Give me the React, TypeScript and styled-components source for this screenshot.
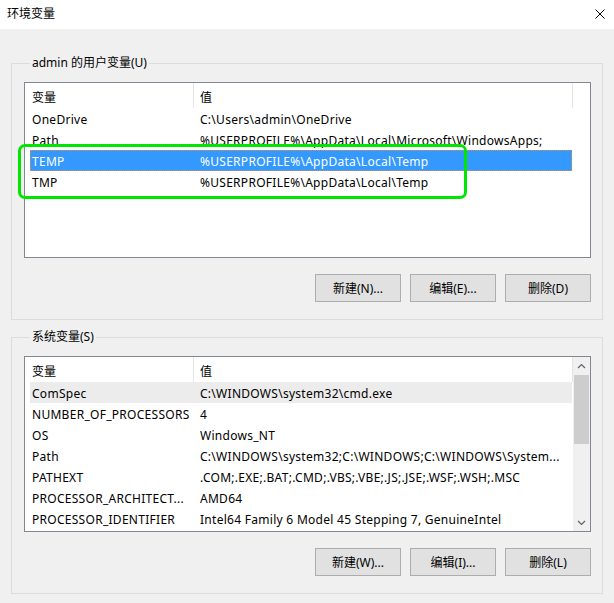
import React from "react";
import styled, { createGlobalStyle } from "styled-components";

const GlobalStyle = createGlobalStyle`
  html, body {
    margin: 0;
    padding: 0;
    background: #f0f0f0;
  }
  body {
    font-family: "Noto Sans", "Noto Sans CJK SC", sans-serif;
    font-size: 12px;
    color: #000;
  }
`;

const Window = styled.div`
  position: relative;
  width: 614px;
  height: 603px;
  background: #f0f0f0;
  display: flex;
  flex-direction: column;
  overflow: hidden;
`;

const TitleBar = styled.div`
  flex: none;
  height: 29px;
  box-sizing: border-box;
  background: #fff;
  display: flex;
  align-items: center;
  justify-content: space-between;
  padding: 0 9px 1px 7px;
`;

const Title = styled.span`
  font-size: 12px;
  line-height: 16px;
`;

const CloseButton = styled.span`
  display: flex;
  width: 10px;
  height: 10px;
`;

const Body = styled.div`
  display: flex;
  flex-direction: column;
  gap: 9px;
  padding: 26px 11px 0 11px;
`;

const GroupBox = styled.fieldset`
  margin: 0;
  min-width: 0;
  padding: 11px 11px 17px 12px;
  border: 1px solid #dcdcdc;
  display: flex;
  flex-direction: column;
  gap: 16px;
`;

const Legend = styled.legend`
  margin-left: 6px;
  padding: 0 2px;
  font-size: 12px;
  line-height: 16px;
`;

const ListView = styled.div`
  height: 176px;
  box-sizing: border-box;
  border: 1px solid #828790;
  background: #fff;
  display: flex;
  overflow: hidden;
`;

const ListContent = styled.div`
  flex: 1;
  min-width: 0;
  display: flex;
  flex-direction: column;
`;

const Header = styled.div`
  flex: none;
  height: 25px;
  display: flex;
`;

const HeaderCell = styled.div<{ $w?: number; $pad: number }>`
  box-sizing: border-box;
  ${(p) => (p.$w ? `width: ${p.$w}px; flex: none;` : "flex: 1;")}
  padding-left: ${(p) => p.$pad}px;
  padding-top: 2px;
  display: flex;
  align-items: center;
  border-right: 1px solid #e5e5e5;
`;

const HeaderFiller = styled.div`
  flex: 1;
`;

const Row = styled.div<{ $state?: "selected" | "hover" }>`
  flex: none;
  height: 21px;
  width: 542px;
  margin-left: 5px;
  box-sizing: border-box;
  padding-top: 2px;
  display: flex;
  align-items: center;
  white-space: nowrap;
  letter-spacing: 0.28px;
  background: ${(p) =>
    p.$state === "selected" ? "#3399ff" : p.$state === "hover" ? "#ececec" : "transparent"};
  color: ${(p) => (p.$state === "selected" ? "#fff" : "#000")};
  outline: ${(p) => (p.$state === "selected" ? "1px dotted #d98c4a" : "none")};
  outline-offset: -1px;
`;

const NameCell = styled.span`
  flex: none;
  width: 163px;
  box-sizing: border-box;
  padding: 0 1px 0 2px;
  overflow: hidden;
  text-overflow: ellipsis;
`;

const ValueCell = styled.span`
  flex: 1;
  min-width: 0;
  padding-left: 7px;
  overflow: hidden;
  text-overflow: ellipsis;
`;

const ScrollBar = styled.div`
  flex: none;
  width: 17px;
  background: #f0f0f0;
  display: flex;
  flex-direction: column;
`;

const ArrowButton = styled.div`
  flex: none;
  height: 17px;
  display: flex;
  align-items: center;
  justify-content: center;
`;

const Thumb = styled.div`
  flex: none;
  height: 69px;
  margin: 1px 1px 0 1px;
  background: #cdcdcd;
`;

const Track = styled.div`
  flex: 1;
`;

const ButtonRow = styled.div`
  display: flex;
  justify-content: flex-end;
  gap: 9px;
`;

const Button = styled.button`
  width: 86px;
  height: 28px;
  box-sizing: border-box;
  margin: 0;
  padding: 0;
  border: 1px solid #adadad;
  background: #e1e1e1;
  font-family: inherit;
  font-size: 12px;
  color: #000;
`;

const Highlight = styled.div`
  position: absolute;
  left: 18px;
  top: 144px;
  width: 449px;
  height: 55px;
  box-sizing: border-box;
  border: 3px solid #00e600;
  border-radius: 7px;
  pointer-events: none;
`;

type Variable = { name: string; value: string; state?: "selected" | "hover" };

const userVars: Variable[] = [
  { name: "OneDrive", value: String.raw`C:\Users\admin\OneDrive` },
  { name: "Path", value: String.raw`%USERPROFILE%\AppData\Local\Microsoft\WindowsApps;` },
  { name: "TEMP", value: String.raw`%USERPROFILE%\AppData\Local\Temp`, state: "selected" },
  { name: "TMP", value: String.raw`%USERPROFILE%\AppData\Local\Temp` },
];

const systemVars: Variable[] = [
  { name: "ComSpec", value: String.raw`C:\WINDOWS\system32\cmd.exe`, state: "hover" },
  { name: "NUMBER_OF_PROCESSORS", value: "4" },
  { name: "OS", value: "Windows_NT" },
  { name: "Path", value: String.raw`C:\WINDOWS\system32;C:\WINDOWS;C:\WINDOWS\System...` },
  { name: "PATHEXT", value: ".COM;.EXE;.BAT;.CMD;.VBS;.VBE;.JS;.JSE;.WSF;.WSH;.MSC" },
  { name: "PROCESSOR_ARCHITECT...", value: "AMD64" },
  { name: "PROCESSOR_IDENTIFIER", value: "Intel64 Family 6 Model 45 Stepping 7, GenuineIntel" },
];

const Chevron = ({ up }: { up?: boolean }) => (
  <svg width="9" height="6" viewBox="0 0 9 6">
    <polyline
      points={up ? "1,5 4.5,1.5 8,5" : "1,1 4.5,4.5 8,1"}
      fill="none"
      stroke="#606060"
      strokeWidth="1.2"
    />
  </svg>
);

const VariableList = ({ rows, scroll }: { rows: Variable[]; scroll?: boolean }) => (
  <ListView>
    <ListContent>
      <Header>
        <HeaderCell $w={169} $pad={7}>变量</HeaderCell>
        <HeaderCell $w={379} $pad={6}>值</HeaderCell>
        {!scroll && <HeaderFiller />}
      </Header>
      {rows.map((r) => (
        <Row key={r.name + r.value} $state={r.state}>
          <NameCell>{r.name}</NameCell>
          <ValueCell>{r.value}</ValueCell>
        </Row>
      ))}
    </ListContent>
    {scroll && (
      <ScrollBar>
        <ArrowButton>
          <Chevron up />
        </ArrowButton>
        <Thumb />
        <Track />
        <ArrowButton>
          <Chevron />
        </ArrowButton>
      </ScrollBar>
    )}
  </ListView>
);

export default function App() {
  return (
    <Window>
      <GlobalStyle />
      <TitleBar>
        <Title>环境变量</Title>
        <CloseButton>
          <svg width="10" height="10" viewBox="0 0 10 10">
            <path d="M0.5 0.5 L9.5 9.5 M9.5 0.5 L0.5 9.5" stroke="#000" strokeWidth="1" fill="none" />
          </svg>
        </CloseButton>
      </TitleBar>
      <Body>
        <GroupBox>
          <Legend>admin 的用户变量(U)</Legend>
          <VariableList rows={userVars} />
          <ButtonRow>
            <Button>新建(N)...</Button>
            <Button>编辑(E)...</Button>
            <Button>删除(D)</Button>
          </ButtonRow>
        </GroupBox>
        <GroupBox>
          <Legend>系统变量(S)</Legend>
          <VariableList rows={systemVars} scroll />
          <ButtonRow>
            <Button>新建(W)...</Button>
            <Button>编辑(I)...</Button>
            <Button>删除(L)</Button>
          </ButtonRow>
        </GroupBox>
      </Body>
      <Highlight />
    </Window>
  );
}
